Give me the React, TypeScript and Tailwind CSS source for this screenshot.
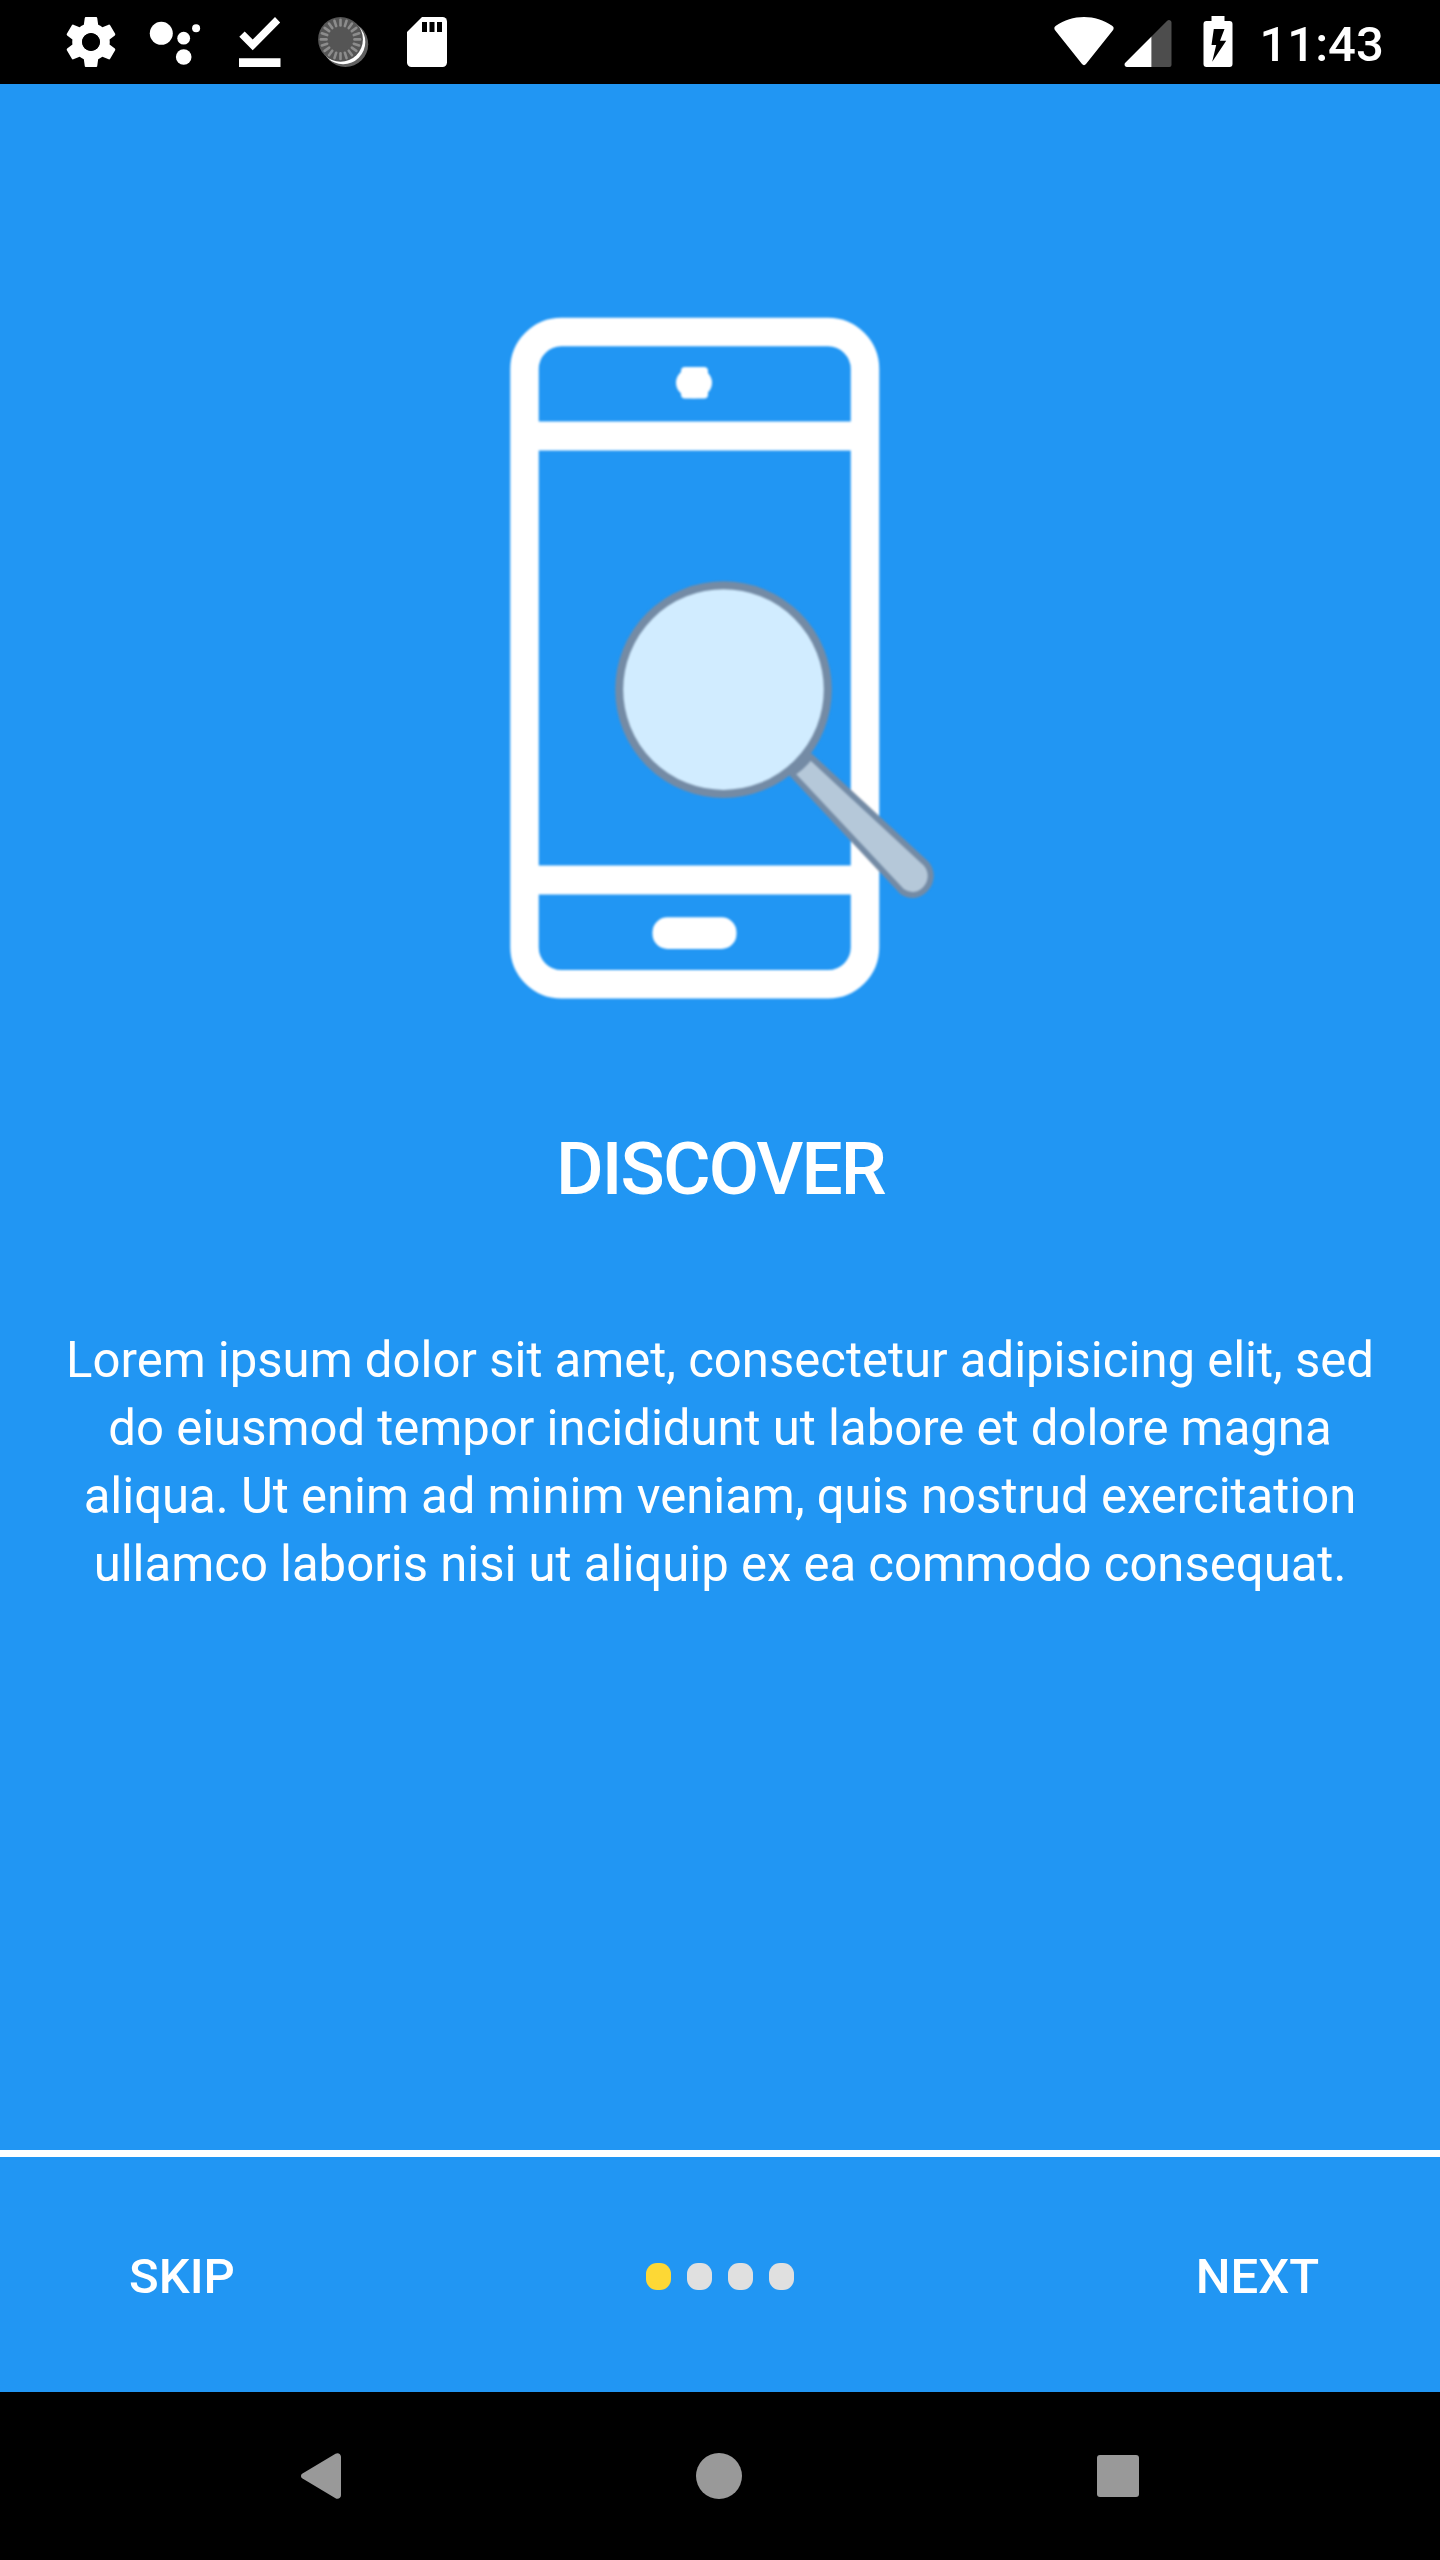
import React from "react";

function SettingsIcon() {
  return (
    <svg className="size-[60px]" viewBox="0 0 24 24" fill="white">
      <path d="M19.43 12.98c.04-.32.07-.64.07-.98s-.03-.66-.07-.98l2.11-1.65c.19-.15.24-.42.12-.64l-2-3.46c-.12-.22-.39-.3-.61-.22l-2.49 1c-.52-.4-1.08-.73-1.69-.98l-.38-2.65C14.46 2.18 14.25 2 14 2h-4c-.25 0-.46.18-.49.42l-.38 2.65c-.61.25-1.17.59-1.69.98l-2.49-1c-.23-.09-.49 0-.61.22l-2 3.46c-.13.22-.07.49.12.64l2.11 1.65c-.04.32-.07.65-.07.98s.03.66.07.98l-2.11 1.65c-.19.15-.24.42-.12.64l2 3.46c.12.22.39.3.61.22l2.49-1c.52.4 1.08.73 1.69.98l.38 2.65c.03.24.24.42.49.42h4c.25 0 .46-.18.49-.42l.38-2.65c.61-.25 1.17-.59 1.69-.98l2.49 1c.23.09.49 0 .61-.22l2-3.46c.12-.22.07-.49-.12-.64l-2.11-1.65zM12 15.5c-1.93 0-3.5-1.57-3.5-3.5s1.57-3.5 3.5-3.5 3.5 1.57 3.5 3.5-1.57 3.5-3.5 3.5z" />
      <circle cx="12" cy="12" r="3.6" fill="black" />
    </svg>
  );
}

function AssistantIcon() {
  return (
    <svg className="size-[60px]" viewBox="145 12 60 60" fill="white">
      <circle cx="161.3" cy="33.3" r="11.5" />
      <circle cx="183.7" cy="38.2" r="6.4" />
      <circle cx="196.1" cy="28.3" r="4" />
      <circle cx="183.7" cy="57" r="7.8" />
    </svg>
  );
}

function DoneIcon() {
  return (
    <svg className="size-[60px]" viewBox="229 12 60 60" fill="white">
      <path d="M275 17l5.2 5.5-27.5 27.8-13.4-13.6 5.4-5.2 8 8zM239 58.2h41.5v8.8H239z" />
    </svg>
  );
}

function SpinnerIcon() {
  return (
    <svg className="size-[60px]" viewBox="313 12 60 60">
      <circle cx="345.4" cy="44.2" r="22.8" fill="#606060" />
      <circle cx="343.1" cy="42.1" r="22.2" fill="white" />
      <circle cx="340.5" cy="39.4" r="22.4" fill="#555555" />
      {Array.from({ length: 20 }, (_, i) => (
        <path
          key={i}
          d="M340.5 19.8v5.6"
          stroke="#8c8c8c"
          strokeWidth="2.6"
          strokeLinecap="round"
          transform={`rotate(${i * 18} 340.5 39.4)`}
        />
      ))}
    </svg>
  );
}

function SdCardIcon() {
  return (
    <svg className="size-[60px]" viewBox="397 12 60 60">
      <path
        fill="white"
        d="M422 17h20.5a4.5 4.5 0 0 1 4.5 4.5v41a4.5 4.5 0 0 1-4.5 4.5h-31a4.5 4.5 0 0 1-4.5-4.5V32z"
      />
      <path d="M422 22h5v10h-5zM429.5 22h5v10h-5zM437 22h5v10h-5z" />
    </svg>
  );
}

function WifiIcon() {
  return (
    <svg className="h-[60px] w-[64px]" viewBox="1052 12 64 60" fill="white">
      <path d="M1055.3 30.5c-1.5-2-1.2-3.6.6-4.8 8.3-5.8 17.9-8.7 28.1-8.7s19.8 2.9 28.1 8.7c1.8 1.2 2.1 2.8.6 4.8l-26.7 33.6c-1.2 1.5-2.8 1.5-4 0z" />
    </svg>
  );
}

function SignalIcon() {
  return (
    <svg className="h-[60px] w-[48px]" viewBox="1123.5 12 48 60">
      <path fill="#4d4d4d" d="M1151 36.5l15.7-15.7c1.6-1.6 4.3-.5 4.3 1.7v42.5a2 2 0 0 1-2 2h-18z" />
      <path fill="white" d="M1151 36.5V67h-24.5c-2.2 0-3.3-2.6-1.7-4.2z" />
    </svg>
  );
}

function BatteryIcon() {
  return (
    <svg className="h-[60px] w-[30px]" viewBox="1202.5 12 30 60">
      <path
        fill="white"
        d="M1211 16h13v5h5a3 3 0 0 1 3 3v40a3 3 0 0 1-3 3h-23a3 3 0 0 1-3-3V24a3 3 0 0 1 3-3h5z"
      />
      <path d="M1213.3 29h10.7l-4.5 11.8h6.2l-14 20.9 4-16.7h-4.7z" />
    </svg>
  );
}

function DiscoverIllustration() {
  return (
    <svg className="h-[700px] w-[460px] blur-[0.8px]" viewBox="490 308 460 700">
      <rect x="524.5" y="332" width="340.5" height="652.3" rx="37" fill="none" stroke="white" strokeWidth="28.5" />
      <rect x="530" y="421.5" width="330" height="29" fill="white" />
      <rect x="530" y="865.5" width="330" height="29" fill="white" />
      <rect x="681" y="367" width="27" height="31.5" rx="4" fill="white" />
      <ellipse cx="694" cy="382.7" rx="18" ry="15.5" fill="white" />
      <rect x="652.5" y="917.3" width="84" height="31.7" rx="15" fill="white" />
      <circle cx="723.5" cy="689.6" r="104.3" fill="#d1ecff" stroke="#748ba5" strokeWidth="8" />
      <path
        d="M791.5 773.5C798 770 805 763.5 810.5 756.5L926 863.5C940 880 920 904 902 891.5Z"
        fill="#b5c8d9"
        stroke="#748ba5"
        strokeWidth="6"
        strokeLinejoin="round"
      />
    </svg>
  );
}

const pages = [true, false, false, false];

export default function App() {
  return (
    <div className="flex h-[2560px] w-[1440px] flex-col overflow-hidden bg-[#2196f3] font-['Roboto',sans-serif] text-white">
      <header className="flex h-[84px] shrink-0 items-center justify-between bg-black pr-[57px] pl-[61px]">
        <div className="flex items-center gap-6">
          <SettingsIcon />
          <AssistantIcon />
          <DoneIcon />
          <SpinnerIcon />
          <SdCardIcon />
        </div>
        <div className="flex items-center">
          <WifiIcon />
          <div className="ml-[7.5px] flex">
            <SignalIcon />
          </div>
          <div className="ml-[31px] flex">
            <BatteryIcon />
          </div>
          <span className="ml-[27px] w-[123.5px] pt-[5px] text-[49px] leading-[60px] font-medium whitespace-nowrap">11:43</span>
        </div>
      </header>

      <main className="flex h-[2066px] shrink-0 flex-col items-center pt-[224px]">
        <DiscoverIllustration />
        <h1 className="mt-[116px] h-[90px] pl-px text-[73px] leading-[90px] font-medium tracking-[-1.9px] whitespace-nowrap">DISCOVER</h1>
        <p className="mt-[112px] text-center text-[49.05px] leading-[68px] whitespace-nowrap">
          Lorem ipsum dolor sit amet, consectetur adipisicing elit, sed
          <br />
          do eiusmod tempor incididunt ut labore et dolore magna
          <br />
          aliqua. Ut enim ad minim veniam, quis nostrud exercitation
          <br />
          ullamco laboris nisi ut aliquip ex ea commodo consequat.
        </p>
      </main>

      <div className="h-[7px] shrink-0 bg-white" />

      <footer className="grid h-[235px] shrink-0 grid-cols-3 items-center px-[121px]">
        <button className="ml-2 justify-self-start pt-1 text-[49px] leading-[60px] font-medium">SKIP</button>
        <div className="flex gap-4 justify-self-center pt-1">
          {pages.map((active, i) => (
            <span
              key={i}
              className={active ? "h-[27px] w-[25px] rounded-[11px] bg-[#fdd835]" : "h-[27px] w-[25px] rounded-[11px] bg-[#e0e0e0]"}
            />
          ))}
        </div>
        <button className="justify-self-end pt-1 text-[49px] leading-[60px] font-medium">NEXT</button>
      </footer>

      <nav className="flex h-[168px] shrink-0 items-center justify-between bg-black px-[301px]">
        <svg className="h-[46px] w-[40px]" viewBox="0 0 40 46" fill="#999999">
          <path d="M1.5 20.5L34.5.7C37-.7 40 .9 40 3.8v38.4c0 2.9-3 4.5-5.5 3.1L1.5 25.5c-2-1.2-2-3.8 0-5z" />
        </svg>
        <div className="size-[46px] rounded-full bg-[#999999]" />
        <div className="size-[42px] rounded-[3px] bg-[#999999]" />
      </nav>
    </div>
  );
}
